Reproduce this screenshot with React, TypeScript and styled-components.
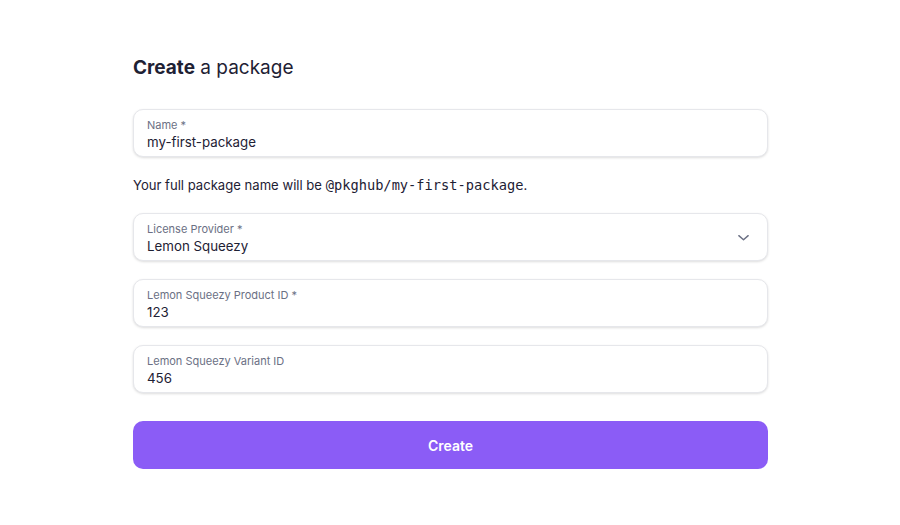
import React, { useState } from 'react';
import styled, { createGlobalStyle } from 'styled-components';

const GlobalStyle = createGlobalStyle`
  body {
    margin: 0;
    background: #ffffff;
    font-family: Inter, "Noto Sans", sans-serif;
    color: #1e2134;
  }
  * { box-sizing: border-box; }
`;

interface FieldProps {
  label: string;
  value: string;
  onChange?: (v: string) => void;
  select?: boolean;
}

function Field({ label, value, onChange, select }: FieldProps) {
  return (
    <FieldBox>
      <FieldText>
        <Label>{label}</Label>
        <Value value={value} readOnly={!onChange} onChange={(e) => onChange && onChange(e.target.value)} />
      </FieldText>
      {select && (
        <Chevron viewBox="0 0 16 16" width="15" height="15">
          <path d="M3 6 L8 10.5 L13 6" fill="none" stroke="#6b7084" strokeWidth="1.5" strokeLinecap="round" strokeLinejoin="round" />
        </Chevron>
      )}
    </FieldBox>
  );
}

export default function App() {
  const [name, setName] = useState('my-first-package');
  const [product, setProduct] = useState('123');
  const [variant, setVariant] = useState('456');

  return (
    <Page>
      <GlobalStyle />
      <Form onSubmit={(e: React.FormEvent<HTMLFormElement>) => e.preventDefault()}>
        <Title>
          <strong>Create</strong> a package
        </Title>
        <Fields>
          <Field label="Name *" value={name} onChange={setName} />
          <Hint>
            Your full package name will be <Code>@pkghub/{name}</Code>.
          </Hint>
          <Field label="License Provider *" value="Lemon Squeezy" select />
          <Field label="Lemon Squeezy Product ID *" value={product} onChange={setProduct} />
          <Field label="Lemon Squeezy Variant ID" value={variant} onChange={setVariant} />
        </Fields>
        <SubmitButton type="submit">Create</SubmitButton>
      </Form>
    </Page>
  );
}

const Page = styled.div`
  display: flex;
  justify-content: center;
  padding: 56px 0 40px;
`;

const Form = styled.form`
  width: 635px;
  margin-left: 1px;
  display: flex;
  flex-direction: column;
`;

const Title = styled.h1`
  margin: 0 0 29px;
  font-size: 19px;
  line-height: 24px;
  font-weight: 400;
  color: #1e2134;

  strong {
    font-weight: 700;
  }
`;

const Fields = styled.div`
  display: flex;
  flex-direction: column;
  gap: 18px;
`;

const FieldBox = styled.div`
  height: 48px;
  display: flex;
  align-items: center;
  border: 1px solid #e6e7eb;
  border-radius: 10px;
  background: #fff;
  box-shadow: 0 1px 3px rgba(0, 0, 0, 0.09), 0 1px 2px rgba(0, 0, 0, 0.05);
  padding: 0 16px 0 13px;
`;

const FieldText = styled.div`
  flex: 1;
  display: flex;
  flex-direction: column;
  padding-top: 2px;
`;

const Label = styled.span`
  font-size: 11px;
  line-height: 14px;
  color: #6b7084;
`;

const Value = styled.input`
  border: none;
  outline: none;
  padding: 0;
  margin: 1px 0 0;
  font-family: inherit;
  font-size: 13.3px;
  line-height: 18px;
  height: 18px;
  color: #1e2134;
  background: transparent;
`;

const Chevron = styled.svg`
  flex: none;
`;

const Hint = styled.p`
  margin: 0;
  font-size: 13.1px;
  line-height: 20px;
  color: #1e2134;
`;

const Code = styled.code`
  font-family: "DejaVu Sans Mono", "Liberation Mono", monospace;
  font-size: 13.7px;
  color: #1e2134;
`;

const SubmitButton = styled.button`
  margin-top: 28px;
  height: 48px;
  border: none;
  border-radius: 10px;
  background: #8b5cf6;
  color: #fff;
  font-family: Inter, sans-serif;
  font-size: 14px;
  font-weight: 600;
  cursor: pointer;
`;
